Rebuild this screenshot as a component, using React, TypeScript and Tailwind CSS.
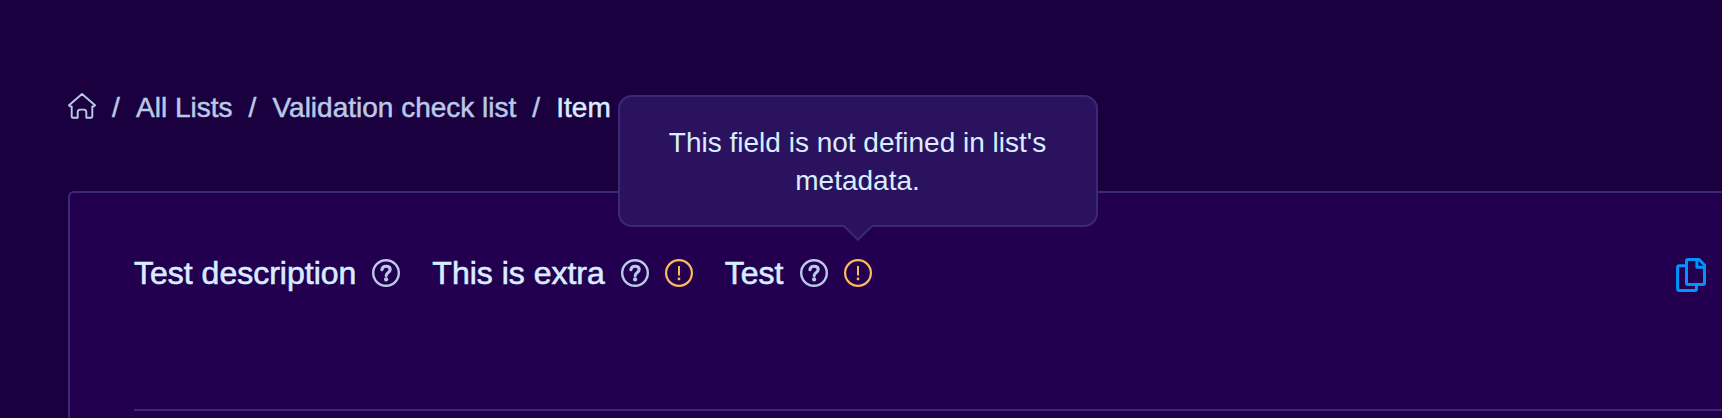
import React from "react";

interface Field {
  id: number;
  name: string;
  undefinedInMeta: boolean;
  message?: string;
}

const fields: Field[] = [
  { id: 1, name: "Test description", undefinedInMeta: false },
  { id: 2, name: "This is extra", undefinedInMeta: true },
  { id: 3, name: "Test", undefinedInMeta: true, message: "This field is not defined in list's metadata." },
];

const HomeIcon = () => (
  <svg width="28" height="26" viewBox="0 0 28 26" fill="none" stroke="currentColor" strokeWidth="1.9" strokeLinejoin="round">
    <path d="M14 1 L27 12.2 L26 13.4 H24.3 V23.4 Q24.3 24.8 22.9 24.8 H18.3 V19.3 Q18.3 16.6 16 16.6 H12 Q9.7 16.6 9.7 19.3 V24.8 H5.1 Q3.7 24.8 3.7 23.4 V13.4 H2 L1 12.2 Z" />
  </svg>
);

const HelpIcon = () => (
  <svg width="28" height="28" viewBox="0 0 28 28" fill="none" stroke="currentColor">
    <circle cx="14" cy="14" r="12.8" strokeWidth="2.4" />
    <path d="M9.9 10.8 C10.2 8.3 11.9 7.3 14.1 7.3 C16.6 7.3 18.2 8.7 18.2 10.6 C18.2 13.6 14.2 13.3 14.2 16.6" strokeWidth="3.1" strokeLinecap="round" />
    <circle cx="14.1" cy="20.4" r="2.1" fill="currentColor" stroke="none" />
  </svg>
);

const WarningIcon = () => (
  <svg width="28" height="28" viewBox="0 0 28 28" fill="none" stroke="currentColor">
    <circle cx="14" cy="14" r="12.9" strokeWidth="2.2" />
    <path d="M14 7 V16.6" strokeWidth="2" />
    <path d="M14 18.6 V21.2" strokeWidth="2.4" />
  </svg>
);

const CopyIcon = () => (
  <svg width="30" height="34" viewBox="0 0 30 34" fill="none" stroke="currentColor" strokeWidth="3" strokeLinejoin="round">
    <path d="M10 7.8 H3.3 Q1.6 7.8 1.6 9.5 V30.8 Q1.6 32.5 3.3 32.5 H18.8 Q20.5 32.5 20.5 30.8 V27" />
    <path d="M12.2 1.5 H23 L28.5 7 V24.9 Q28.5 26.4 26.8 26.4 H12.2 Q10.5 26.4 10.5 24.9 V3.2 Q10.5 1.5 12.2 1.5 Z" />
    <path d="M20.9 1.5 V9.2 H28.5" strokeWidth="3" />
  </svg>
);

const Tooltip = ({ text }: { text: string }) => (
  <div
    role="tooltip"
    className="absolute bottom-[60px] left-1/2 -ml-[240px] h-[132px] w-[480px] rounded-[14px] border-2 border-[#3b2a73] bg-[#2b125e] px-[34px] pt-[27px] text-center text-[28px] leading-[38px] text-[#d8edff]"
  >
    {text}
    <svg className="absolute top-[128px] left-[224px]" width="28" height="16" viewBox="0 0 28 16" fill="none">
      <path d="M0 0 H28 L14 14.3 Z" fill="#2b125e" />
      <path d="M0 1 L14 14.8 L28 1" stroke="#3b2a73" strokeWidth="2" />
    </svg>
  </div>
);

const Separator = () => <span className="w-[8px]">/</span>;

const App = () => {
  return (
    <div className="h-[418px] overflow-hidden bg-[#1b003f] pl-[68px] font-['Liberation_Sans',Arial,sans-serif]">
      {/* Breadcrumb */}
      <nav className="flex h-[191px] items-start pt-[92px] text-[28px] leading-[32px] whitespace-nowrap text-[#b9c9e7] [-webkit-text-stroke:0.5px]">
        <span className="mt-px mr-[16px]">
          <HomeIcon />
        </span>
        <Separator />
        <span className="mr-[16px] ml-[16px]">All Lists</span>
        <Separator />
        <span className="mr-[16px] ml-[16px]">Validation check list</span>
        <Separator />
        <span className="ml-[16px] text-[#d8edff]">Item</span>
      </nav>

      {/* Item panel */}
      <section className="h-[260px] rounded-tl-[6px] border-t-2 border-l-2 border-[#3b2a73] bg-[#22004f] pl-[64px]">
        <div className="flex h-[216px] items-start justify-between pt-[62px] pr-[16px]">
          <div className="flex gap-[32px]">
            {fields.map((field) => (
              <div key={field.id} className="flex h-[36px] items-center gap-[16px]">
                <span className="text-[32px] leading-[36px] whitespace-nowrap text-[#d8edff] [-webkit-text-stroke:0.6px]">
                  {field.name}
                </span>
                <span className="mt-[0px] text-[#b9c9e7]">
                  <HelpIcon />
                </span>
                {field.undefinedInMeta && (
                  <div className="relative text-[#ffb95c]">
                    <WarningIcon />
                    {field.message && <Tooltip text={field.message} />}
                  </div>
                )}
              </div>
            ))}
          </div>
          <button className="mt-[3px] text-[#0094ff]" aria-label="Copy">
            <CopyIcon />
          </button>
        </div>
        <hr className="border-t-2 border-[#3b2a73]" />
      </section>
    </div>
  );
};

export default App;
